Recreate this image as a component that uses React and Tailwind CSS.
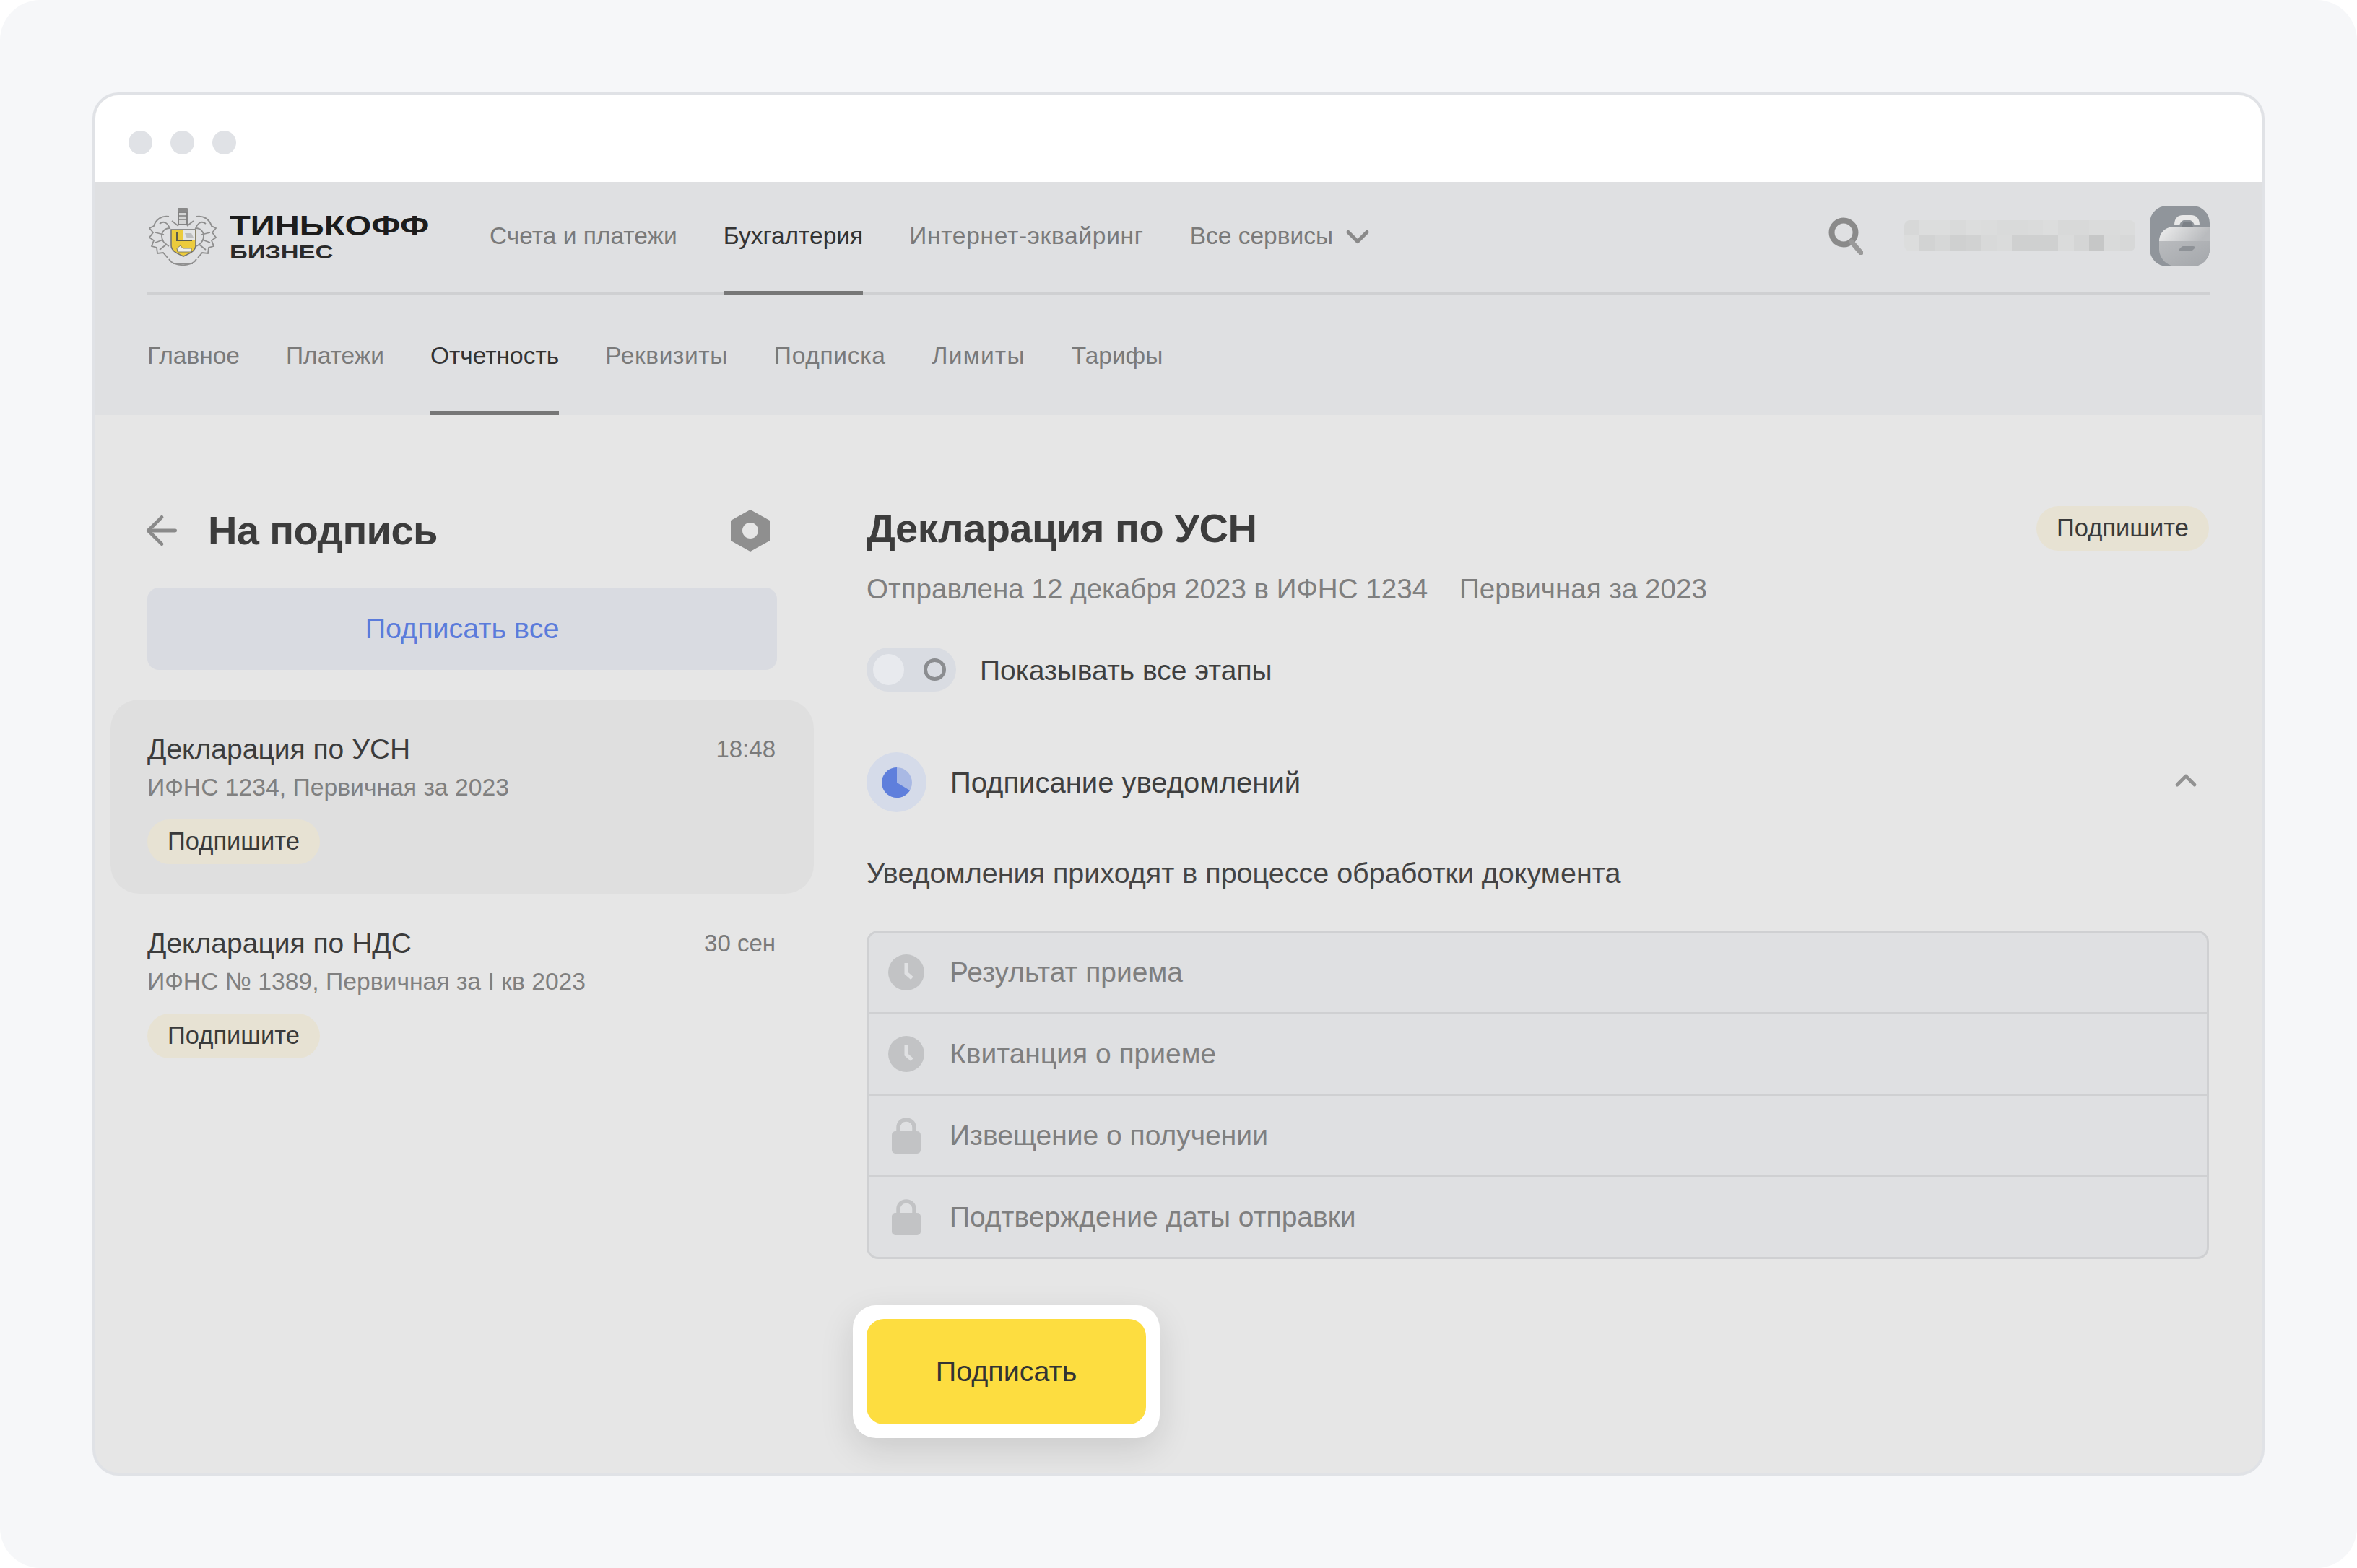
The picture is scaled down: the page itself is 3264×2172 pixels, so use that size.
import { ChevronDown, ChevronUp, ArrowLeft } from "lucide-react";

const topNav = [
  { label: "Счета и платежи" },
  { label: "Бухгалтерия", active: true },
  { label: "Интернет-эквайринг", spacing: "tracking-[0.7px]" },
];

const subNav = [
  { label: "Главное" },
  { label: "Платежи" },
  { label: "Отчетность", active: true },
  { label: "Реквизиты", spacing: "tracking-[0.6px]" },
  { label: "Подписка", spacing: "tracking-[0.7px]" },
  { label: "Лимиты", spacing: "tracking-[1.2px]" },
  { label: "Тарифы" },
];

const steps = [
  { label: "Результат приема", icon: "clock" },
  { label: "Квитанция о приеме", icon: "clock" },
  { label: "Извещение о получении", icon: "lock" },
  { label: "Подтверждение даты отправки", icon: "lock" },
];

const docs = [
  { title: "Декларация по УСН", sub: "ИФНС 1234, Первичная за 2023", time: "18:48", selected: true },
  { title: "Декларация по НДС", sub: "ИФНС № 1389, Первичная за I кв 2023", time: "30 сен" },
];

const blurTop = [
  "bg-[#d7d8d8]", "bg-[#dcdddd]", "bg-[#dcdddd]", "bg-[#d9dada]", "bg-[#dcdddd]", "bg-[#dbdcdc]", "bg-[#d9dada]", "bg-[#d9dada]",
  "bg-[#dadbdb]", "bg-[#dcdddd]", "bg-[#d8d9d9]", "bg-[#d8d9d9]", "bg-[#dadbdb]", "bg-[#dadbdb]", "bg-[#dbdcdc]",
];
const blurBottom = [
  "bg-[#dcdddd]", "bg-[#d2d3d3]", "bg-[#d6d7d7]", "bg-[#cfd0d0]", "bg-[#d1d2d2]", "bg-[#d8d9d9]", "bg-[#dadbdb]", "bg-[#cfd0d0]",
  "bg-[#cfd0d0]", "bg-[#cfd0d0]", "bg-[#dadbdb]", "bg-[#d4d5d5]", "bg-[#c6c7c7]", "bg-[#d9dada]", "bg-[#d7d8d8]",
];

function Emblem() {
  return (
    <svg viewBox="0 0 94 85" className="ml-[2px] w-[94px] h-[85px] shrink-0" fill="none">
      <g stroke="#8f8f8f" strokeWidth="1.8">
        <path d="M28 14 C18 12 10 18 7 27 L1 30 L6 36 L1 43 L7 47 L4 55 L11 57 L12 65 L20 64 L26 71" />
        <path d="M66 14 C76 12 84 18 87 27 L93 30 L88 36 L93 43 L87 47 L90 55 L83 57 L82 65 L74 64 L68 71" />
        <path d="M15 24 C21 19 26 23 29 30 C22 30 18 35 18 41 C18 47 22 52 28 55" />
        <path d="M79 24 C73 19 68 23 65 30 C72 30 76 35 76 41 C76 47 72 52 66 55" />
        <path d="M9 36 L21 39 M9 50 L20 46 M15 60 L25 52 M85 36 L73 39 M85 50 L74 46 M79 60 L69 52" />
        <path d="M28 73 C34 84 60 84 66 73 M33 79 L61 79" />
        <path d="M32 20 L41 27 M62 20 L53 27" />
      </g>
      <rect x="40" y="2" width="14" height="6" rx="1" fill="#8a8a8a" />
      <rect x="41" y="8" width="12" height="17" fill="#d4d5d5" stroke="#7d7d7d" strokeWidth="1.8" />
      <path d="M41 13 H53 M41 18 H53" stroke="#7d7d7d" strokeWidth="1.4" />
      <path d="M31 32 H65 V54 C65 62 55 66 48 69 C41 66 31 62 31 54 Z" fill="#eccb3c" stroke="#737373" strokeWidth="1.6" />
      <rect x="48" y="33" width="16" height="14" fill="#e4e5e5" />
      <path d="M39 36 V47 H60" stroke="#5c5c4c" strokeWidth="2" />
      <path d="M50 37 H59 L62 43 L53 44 Z" fill="#bdbebe" />
      <path d="M39 58 L44 54 L47 58 H59 V63 H40 Z" fill="#efefe8" stroke="#6a6a5a" strokeWidth="0.8" />
    </svg>
  );
}

function Avatar() {
  return (
    <svg viewBox="0 0 83 84" className="w-[83px] h-[84px] shrink-0">
      <defs>
        <linearGradient id="caseTop" x1="0" y1="0" x2="1" y2="0.25">
          <stop offset="0" stopColor="#efefef" />
          <stop offset="1" stopColor="#b9bbbe" />
        </linearGradient>
        <linearGradient id="caseBottom" x1="0" y1="0" x2="1" y2="1">
          <stop offset="0" stopColor="#b9bbbe" />
          <stop offset="1" stopColor="#a4a7ab" />
        </linearGradient>
      </defs>
      <rect width="83" height="84" rx="24" fill="#90959b" />
      <path d="M44 29 L47 22 H57 L60 29 Z" fill="#7c8187" />
      <path d="M34 27 C34 18 38 13 46 13 H57 C65 13 69 18 69 27 H62 C60 22 58 20 55 20 H48 C45 20 43 22 41 27 Z" fill="#e8e8e8" />
      <path d="M13 49 C13 37 22 29 34 29 H83 V49 Z" fill="url(#caseTop)" />
      <path d="M13 49 H83 V60 A24 24 0 0 1 59 84 H37 C24 84 13 73 13 60 Z" fill="url(#caseBottom)" />
      <path d="M46 56 H60 C62 56 63 57 62 59 L60 61 C59 62 57 63 55 63 H43 C41 63 40 62 41 60 L43 58 C44 57 45 56 46 56 Z" fill="#8e9297" />
    </svg>
  );
}

function Badge({ className = "" }) {
  return (
    <span className={`inline-flex items-center justify-center h-[62px] w-[239px] rounded-full bg-[#e7e2d3] text-[34.5px] text-[#3a3a3a] ${className}`}>
      Подпишите
    </span>
  );
}

function StepIcon({ type }) {
  if (type === "clock") {
    return (
      <svg viewBox="0 0 50 50" className="w-[50px] h-[50px]">
        <circle cx="25" cy="25" r="25" fill="#c2c3c5" />
        <path d="M25 12 V26 L33 33" fill="none" stroke="#e0e1e3" strokeWidth="5" />
      </svg>
    );
  }
  return (
    <svg viewBox="0 0 40 50" className="w-[40px] h-[50px]">
      <path d="M9 20 V14 C9 7 14 3 20 3 C26 3 31 7 31 14 V20" fill="none" stroke="#c2c3c5" strokeWidth="5.5" />
      <rect x="0" y="19" width="40" height="31" rx="5" fill="#c2c3c5" />
    </svg>
  );
}

function DocCard({ doc }) {
  return (
    <div className={`-mx-[51px] px-[51px] rounded-[40px] h-[269px] pt-[50px] ${doc.selected ? "bg-[#dfdfdf]" : ""}`}>
      <div className="flex items-center justify-between h-[38px]">
        <span className="text-[39px] text-[#3c3c3c]">{doc.title}</span>
        <span className="mr-[2px] text-[33px] text-[#7a7a7a]">{doc.time}</span>
      </div>
      <div className="mt-[14px] h-[38px] flex items-center text-[33.7px] text-[#808080]">{doc.sub}</div>
      <Badge className="mt-[26px]" />
    </div>
  );
}

export default function App() {
  return (
    <div className="w-[3264px] h-[2172px] bg-white font-['Liberation_Sans',sans-serif]">
      <div className="w-full h-full rounded-[56px] bg-[#f6f7f9] pt-[128px] pl-[128px]">
        <div className="w-[3008px] h-[1916px] border-4 border-[#e0e2e6] rounded-[36px] overflow-hidden bg-[#e6e6e6]">
          {/* window title bar */}
          <div className="h-[120px] bg-white flex items-center gap-[25px] pl-[46px] pt-[10px]">
            <div className="w-[33px] h-[33px] rounded-full bg-[#e0e2e6]" />
            <div className="w-[33px] h-[33px] rounded-full bg-[#e0e2e6]" />
            <div className="w-[33px] h-[33px] rounded-full bg-[#e0e2e6]" />
          </div>

          {/* header */}
          <div className="h-[323px] bg-[#dfe0e2] px-[72px]">
            <div className="h-[156px] flex items-center border-b-[3px] border-[#cfd0d2]">
              <div className="flex items-center w-[474px] h-full">
                <Emblem />
                <div className="ml-[18px] flex flex-col">
                  <span className="font-bold text-[39px] leading-[36px] text-[#1c1c1c] origin-left scale-x-[1.21] whitespace-nowrap">ТИНЬКОФФ</span>
                  <span className="font-bold text-[26px] leading-[26px] mt-[5px] text-[#2a2a2a] origin-left scale-x-[1.32] whitespace-nowrap">БИЗНЕС</span>
                </div>
              </div>
              <div className="flex items-stretch h-full gap-[64px] text-[33.5px]">
                {topNav.map((item) => (
                  <div
                    key={item.label}
                    className={`flex items-center -mb-[3px] border-b-[5px] ${item.spacing || ""} ${item.active ? "border-[#777] text-[#333]" : "border-transparent text-[#7a7a7a]"}`}
                  >
                    {item.label}
                  </div>
                ))}
                <div className="flex items-center gap-[8px] text-[#7a7a7a] -mb-[3px] border-b-[5px] border-transparent">
                  Все сервисы
                  <ChevronDown className="w-[52px] h-[52px] text-[#8a8a8a]" strokeWidth={2.4} />
                </div>
              </div>
              <div className="ml-auto -mt-[4px] flex items-center">
                <svg viewBox="0 0 48 52" className="w-[48px] h-[52px]" fill="none">
                  <circle cx="21" cy="21" r="16.5" stroke="#8a8a8a" strokeWidth="8" />
                  <path d="M32 34 L45 49" stroke="#9a9a9a" strokeWidth="7" strokeLinecap="round" />
                </svg>
                <div className="ml-[57px] mr-[20px] w-[320px] h-[43px] rounded-[8px] overflow-hidden flex flex-col">
                  <div className="flex h-[21px]">
                    {blurTop.map((c, i) => (
                      <div key={i} className={`flex-1 ${c}`} />
                    ))}
                  </div>
                  <div className="flex h-[22px]">
                    {blurBottom.map((c, i) => (
                      <div key={i} className={`flex-1 ${c}`} />
                    ))}
                  </div>
                </div>
                <Avatar />
              </div>
            </div>
            <div className="h-[167px] flex items-stretch gap-[64px] text-[33.5px]">
              {subNav.map((item) => (
                <div
                  key={item.label}
                  className={`flex items-center pt-[8px] border-b-[5px] ${item.spacing || ""} ${item.active ? "border-[#777] text-[#333]" : "border-transparent text-[#7a7a7a]"}`}
                >
                  {item.label}
                </div>
              ))}
            </div>
          </div>

          {/* body */}
          <div className="flex pl-[72px] pr-[73px] gap-[124px]">
            <div className="w-[872px]">
              <div className="h-[111px] mt-[128px] flex items-start">
                <div className="flex items-center h-[64px] w-full">
                  <ArrowLeft className="shrink-0 w-[64px] h-[64px] text-[#8a8a8a] -ml-[12px]" strokeWidth={1.8} />
                  <span className="ml-[32px] font-bold text-[56px] tracking-[-0.6px] text-[#3c3c3c]">На подпись</span>
                  <svg viewBox="0 0 54 58" className="ml-auto mr-[10px] w-[54px] h-[58px]">
                    <path d="M27 0 L54 15 V43 L27 58 L0 43 V15 Z" fill="#8f8f8f" />
                    <circle cx="27" cy="29" r="11" fill="#e6e6e6" />
                  </svg>
                </div>
              </div>
              <div className="h-[114px] rounded-[16px] bg-[#d9dbe1] flex items-center justify-center text-[39.5px] text-[#5b7bdb]">
                Подписать все
              </div>
              <div className="mt-[41px]">
                {docs.map((doc) => (
                  <DocCard key={doc.title} doc={doc} />
                ))}
              </div>
            </div>

            <div className="flex-1">
              <div className="h-[64px] mt-[125px] flex items-center justify-between">
                <span className="font-bold text-[56px] tracking-[-0.5px] text-[#3c3c3c]">Декларация по УСН</span>
                <Badge />
              </div>
              <div className="mt-[30px] h-[44px] flex items-center gap-[44px] text-[38.6px] text-[#7f7f7f]">
                <span>Отправлена 12 декабря 2023 в ИФНС 1234</span>
                <span>Первичная за 2023</span>
              </div>
              <div className="mt-[59px] flex items-center h-[61px]">
                <div className="w-[124px] h-[61px] rounded-full bg-[#d9dce2] flex items-center justify-between pl-[9px] pr-[14px]">
                  <div className="w-[43px] h-[43px] rounded-full bg-[#e8eaee]" />
                  <div className="w-[31px] h-[31px] rounded-full border-[5px] border-[#8b8d90]" />
                </div>
                <span className="ml-[33px] pt-[3px] text-[39px] text-[#3f3f3f]">Показывать все этапы</span>
              </div>
              <div className="mt-[84px] flex items-center h-[83px]">
                <div className="w-[83px] h-[83px] rounded-full bg-[#d5dbe9] flex items-center justify-center">
                  <svg viewBox="0 0 42 42" className="w-[42px] h-[42px]">
                    <circle cx="21" cy="21" r="21" fill="#a9b9e4" />
                    <path d="M21 0 A21 21 0 1 0 39 32 L21 21 Z" fill="#5f7fdc" />
                  </svg>
                </div>
                <span className="ml-[33px] text-[40px] text-[#3f3f3f]">Подписание уведомлений</span>
                <ChevronUp className="ml-auto mr-[8px] -mt-[6px] w-[48px] h-[48px] text-[#929292]" strokeWidth={2.4} />
              </div>
              <div className="mt-[63px] h-[44px] flex items-center text-[39.5px] text-[#444]">
                Уведомления приходят в процессе обработки документа
              </div>
              <div className="mt-[57px] h-[455px] rounded-[16px] border-[3px] border-[#cfd0d2] bg-[#dfe0e2] flex flex-col">
                {steps.map((step, i) => (
                  <div
                    key={step.label}
                    className={`flex-1 flex items-center ${i > 0 ? "border-t-[3px] border-[#cfd0d2]" : ""}`}
                  >
                    <div className="w-[112px] pl-[27px] pr-[35px] flex justify-center shrink-0">
                      <StepIcon type={step.icon} />
                    </div>
                    <span className="text-[39px] text-[#7f7f7f]">{step.label}</span>
                  </div>
                ))}
              </div>
              <div className="mt-[64px] -ml-[19px] w-[425px] h-[184px] rounded-[32px] bg-white p-[19px] shadow-[0_16px_48px_rgba(0,0,0,0.12)]">
                <div className="w-full h-full rounded-[24px] bg-[#fddd40] flex items-center justify-center text-[39.5px] text-[#333]">
                  Подписать
                </div>
              </div>
            </div>
          </div>
        </div>
      </div>
    </div>
  );
}
